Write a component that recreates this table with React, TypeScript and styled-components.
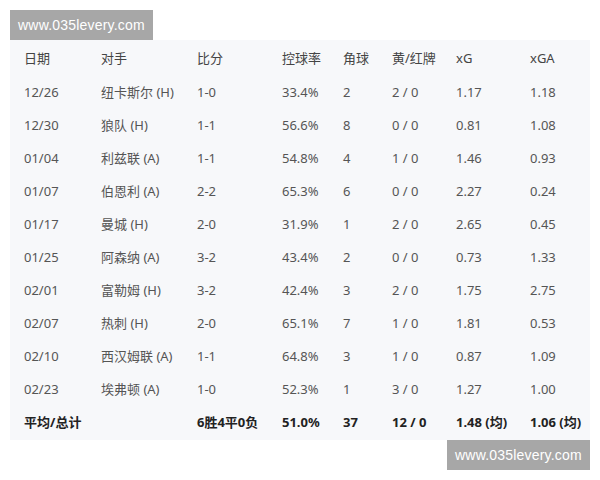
import * as React from "react";
import styled, { createGlobalStyle } from "styled-components";

const GlobalStyle = createGlobalStyle`
  html, body {
    margin: 0;
    padding: 0;
    background: #fff;
  }
  body {
    font-family: "Noto Sans", "Noto Sans CJK SC", sans-serif;
  }
`;

const Page = styled.div`
  width: 600px;
  height: 480px;
  padding: 10px;
  box-sizing: border-box;
  display: flex;
  flex-direction: column;
`;

const Watermark = styled.div<{ $right?: boolean }>`
  width: 143px;
  height: 30px;
  background: #a7a7a7;
  color: #fff;
  font-family: "Liberation Sans", "Noto Sans", sans-serif;
  font-size: 14px;
  letter-spacing: 0.2px;
  display: flex;
  align-items: center;
  justify-content: center;
  align-self: ${p => (p.$right ? "flex-end" : "flex-start")};
`;

const Panel = styled.div`
  width: 580px;
  height: 400px;
  background: #f7f8fa;
  padding-left: 14px;
  box-sizing: border-box;
`;

const Row = styled.div<{ $head?: boolean; $total?: boolean }>`
  display: grid;
  grid-template-columns: 77px 96px 85px 61px 49px 64px 74px 1fr;
  align-items: center;
  height: ${p => (p.$head ? 35 : 33)}px;
  font-size: 13px;
  font-weight: ${p => (p.$total ? 700 : 400)};
  color: ${p => (p.$total ? "#222" : p.$head ? "#444" : "#555")};
`;

const Cell = styled.div`
  white-space: nowrap;
`;

const head = ["日期", "对手", "比分", "控球率", "角球", "黄/红牌", "xG", "xGA"];

const rows = [
  ["12/26", "纽卡斯尔 (H)", "1-0", "33.4%", "2", "2 / 0", "1.17", "1.18"],
  ["12/30", "狼队 (H)", "1-1", "56.6%", "8", "0 / 0", "0.81", "1.08"],
  ["01/04", "利兹联 (A)", "1-1", "54.8%", "4", "1 / 0", "1.46", "0.93"],
  ["01/07", "伯恩利 (A)", "2-2", "65.3%", "6", "0 / 0", "2.27", "0.24"],
  ["01/17", "曼城 (H)", "2-0", "31.9%", "1", "2 / 0", "2.65", "0.45"],
  ["01/25", "阿森纳 (A)", "3-2", "43.4%", "2", "0 / 0", "0.73", "1.33"],
  ["02/01", "富勒姆 (H)", "3-2", "42.4%", "3", "2 / 0", "1.75", "2.75"],
  ["02/07", "热刺 (H)", "2-0", "65.1%", "7", "1 / 0", "1.81", "0.53"],
  ["02/10", "西汉姆联 (A)", "1-1", "64.8%", "3", "1 / 0", "0.87", "1.09"],
  ["02/23", "埃弗顿 (A)", "1-0", "52.3%", "1", "3 / 0", "1.27", "1.00"]
];

const total = ["平均/总计", "", "6胜4平0负", "51.0%", "37", "12 / 0", "1.48 (均)", "1.06 (均)"];

const App = () => (
  <Page>
    <GlobalStyle />
    <Watermark>www.035levery.com</Watermark>
    <Panel>
      <Row $head>
        {head.map(h => (
          <Cell key={h}>{h}</Cell>
        ))}
      </Row>
      {rows.map(r => (
        <Row key={r[0]}>
          {r.map((c, i) => (
            <Cell key={i}>{c}</Cell>
          ))}
        </Row>
      ))}
      <Row $total>
        {total.map((c, i) => (
          <Cell key={i}>{c}</Cell>
        ))}
      </Row>
    </Panel>
    <Watermark $right>www.035levery.com</Watermark>
  </Page>
);

export default App;
